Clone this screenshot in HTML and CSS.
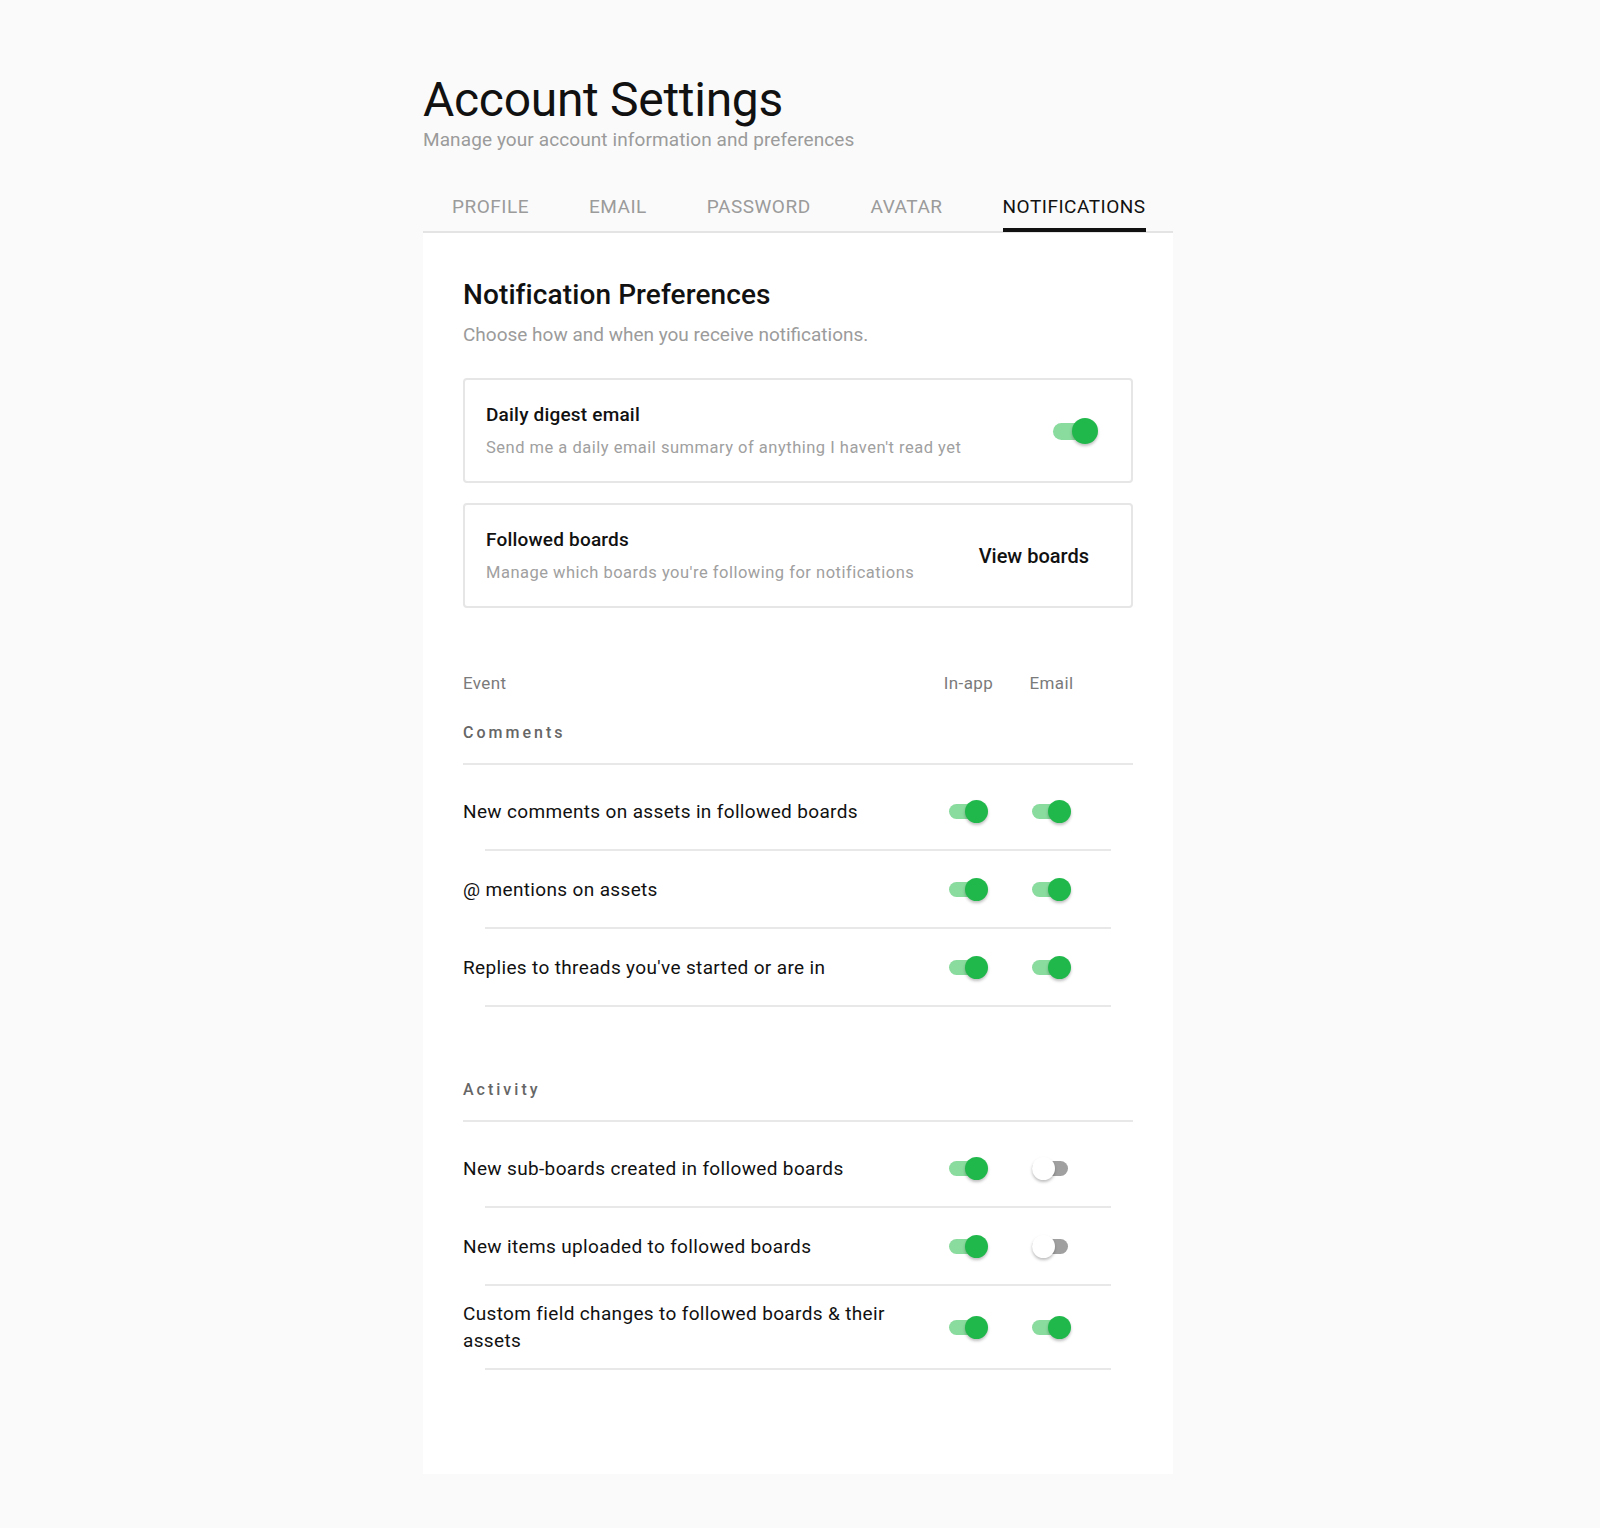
FILE: index.html
```html
<!DOCTYPE html>
<html lang="en">
<head>
    <meta charset="UTF-8">
    <meta name="viewport" content="width=device-width, initial-scale=1.0">
    <title>Account Settings</title>
    <link rel="stylesheet" href="styles.css">
</head>
<body>

    <div class="page">
        <h1 class="page-title">Account Settings</h1>
        <p class="page-subtitle">Manage your account information and preferences</p>

        <!-- settings tabs -->
        <nav class="tabs">
            <a class="tab">PROFILE</a>
            <a class="tab">EMAIL</a>
            <a class="tab">PASSWORD</a>
            <a class="tab">AVATAR</a>
            <a class="tab active">NOTIFICATIONS</a>
        </nav>

        <div class="panel">
            <h2 class="panel-title">Notification Preferences</h2>
            <p class="panel-desc">Choose how and when you receive notifications.</p>

            <div class="card">
                <div class="card-text">
                    <div class="card-title">Daily digest email</div>
                    <div class="card-desc">Send me a daily email summary of anything I haven't read yet</div>
                </div>
                <span class="switch lg on"></span>
            </div>

            <div class="card">
                <div class="card-text">
                    <div class="card-title">Followed boards</div>
                    <div class="card-desc">Manage which boards you're following for notifications</div>
                </div>
                <button class="link-btn">View boards</button>
            </div>

            <!-- event table -->
            <div class="events">
                <div class="events-head">
                    <span>Event</span>
                    <span class="col">In-app</span>
                    <span class="col">Email</span>
                    <span></span>
                </div>

                <div class="group">
                    <div class="group-name">Comments</div>
                    <div class="row">
                        <span class="label">New comments on assets in followed boards</span>
                        <span class="col"><span class="switch on"></span></span>
                        <span class="col"><span class="switch on"></span></span>
                        <span></span>
                    </div>
                    <div class="row">
                        <span class="label">@ mentions on assets</span>
                        <span class="col"><span class="switch on"></span></span>
                        <span class="col"><span class="switch on"></span></span>
                        <span></span>
                    </div>
                    <div class="row">
                        <span class="label">Replies to threads you've started or are in</span>
                        <span class="col"><span class="switch on"></span></span>
                        <span class="col"><span class="switch on"></span></span>
                        <span></span>
                    </div>
                </div>

                <div class="group">
                    <div class="group-name">Activity</div>
                    <div class="row">
                        <span class="label">New sub-boards created in followed boards</span>
                        <span class="col"><span class="switch on"></span></span>
                        <span class="col"><span class="switch"></span></span>
                        <span></span>
                    </div>
                    <div class="row">
                        <span class="label">New items uploaded to followed boards</span>
                        <span class="col"><span class="switch on"></span></span>
                        <span class="col"><span class="switch"></span></span>
                        <span></span>
                    </div>
                    <div class="row">
                        <span class="label">Custom field changes to followed boards &amp; their assets</span>
                        <span class="col"><span class="switch on"></span></span>
                        <span class="col"><span class="switch on"></span></span>
                        <span></span>
                    </div>
                </div>
            </div>
        </div>
    </div>

</body>
</html>
```

FILE: styles.css
```css
body {
    font-family: 'Roboto', 'Liberation Sans', sans-serif;
    background-color: #fafafa;
    color: #111;
    margin: 0;
    padding: 0;
}

.page {
    width: 750px;
    margin: 0 auto;
    padding: 72px 4px 50px 0;
}

.page-title {
    font-size: 48px;
    font-weight: 400;
    line-height: 56px;
    margin: 0;
    letter-spacing: -0.3px;
}

.page-subtitle {
    font-size: 19px;
    line-height: 24px;
    color: #9b9b9b;
    letter-spacing: 0.1px;
    margin: 0;
}

/* tabs */
.tabs {
    display: flex;
    margin-top: 44px;
    border-bottom: 2px solid #e4e4e4;
}

.tab {
    margin: 0 30px -1px;
    padding-bottom: 10px;
    font-size: 19px;
    line-height: 22px;
    letter-spacing: 0.5px;
    color: #9b9b9b;
    border-bottom: 4px solid transparent;
    cursor: pointer;
}

.tab:first-child {
    margin-left: 29px;
}

.tab.active {
    color: #111;
    border-bottom-color: #111;
}

/* white panel */
.panel {
    background-color: white;
    padding: 45px 40px 104px;
}

.panel-title {
    font-size: 28px;
    font-weight: 500;
    line-height: 34px;
    letter-spacing: 0.1px;
    margin: 0;
}

.panel-desc {
    font-size: 19px;
    line-height: 24px;
    color: #9b9b9b;
    margin: 11px 0 31px;
}

.card {
    display: flex;
    align-items: center;
    justify-content: space-between;
    border: 2px solid #e6e6e6;
    border-radius: 4px;
    padding: 23px 22px 22px 21px;
    margin-bottom: 20px;
}

.card-title {
    font-size: 19px;
    font-weight: 500;
    line-height: 24px;
    letter-spacing: 0.2px;
}

.card-desc {
    font-size: 16.5px;
    line-height: 22px;
    color: #a0a0a0;
    letter-spacing: 0.5px;
    margin-top: 10px;
}

.card .switch {
    margin-right: 11px;
}

.link-btn {
    font-family: inherit;
    font-size: 20px;
    font-weight: 500;
    color: #111;
    background: none;
    border: none;
    padding: 8px 20px;
    cursor: pointer;
}

/* events table */
.events {
    margin-top: 65px;
}

.events-head,
.row {
    display: grid;
    grid-template-columns: 1fr 83px 83px 40px;
    align-items: center;
}

.events-head {
    font-size: 17px;
    line-height: 20px;
    letter-spacing: 0.4px;
    color: #7a7a7a;
}

.col {
    text-align: center;
}

.group {
    margin-top: 30px;
}

.group + .group {
    margin-top: 73px;
}

.group-name {
    font-size: 16px;
    font-weight: 500;
    line-height: 20px;
    color: #666;
    letter-spacing: 3px;
    padding-bottom: 20px;
    border-bottom: 2px solid #e8e8e8;
    margin-bottom: 8px;
}

.row {
    box-sizing: border-box;
    min-height: 78px;
    padding: 14px 0 16px;
    background: linear-gradient(#e8e8e8, #e8e8e8) no-repeat left 22px bottom / calc(100% - 44px) 2px;
}

.label {
    font-size: 19px;
    line-height: 27px;
    letter-spacing: 0.35px;
    padding-right: 24px;
    color: #111;
}

/* toggle switch */
.switch {
    display: inline-block;
    position: relative;
    width: 39px;
    height: 23px;
    vertical-align: middle;
}

.switch::before {
    content: '';
    position: absolute;
    left: 0;
    top: 4px;
    width: 36px;
    height: 15px;
    border-radius: 8px;
    background-color: #a0a0a0;
}

.switch::after {
    content: '';
    position: absolute;
    left: 0;
    top: 0;
    width: 23px;
    height: 23px;
    border-radius: 50%;
    background-color: white;
    box-shadow: 0 2px 3px rgba(0, 0, 0, 0.25);
}

.switch.on::before {
    background-color: #8adb9e;
}

.switch.on::after {
    left: auto;
    right: 0;
    background-color: #20b84b;
}

.switch.lg {
    width: 45px;
    height: 26px;
}

.switch.lg::before {
    top: 5px;
    width: 40px;
    height: 17px;
    border-radius: 9px;
}

.switch.lg::after {
    width: 26px;
    height: 26px;
}
```
